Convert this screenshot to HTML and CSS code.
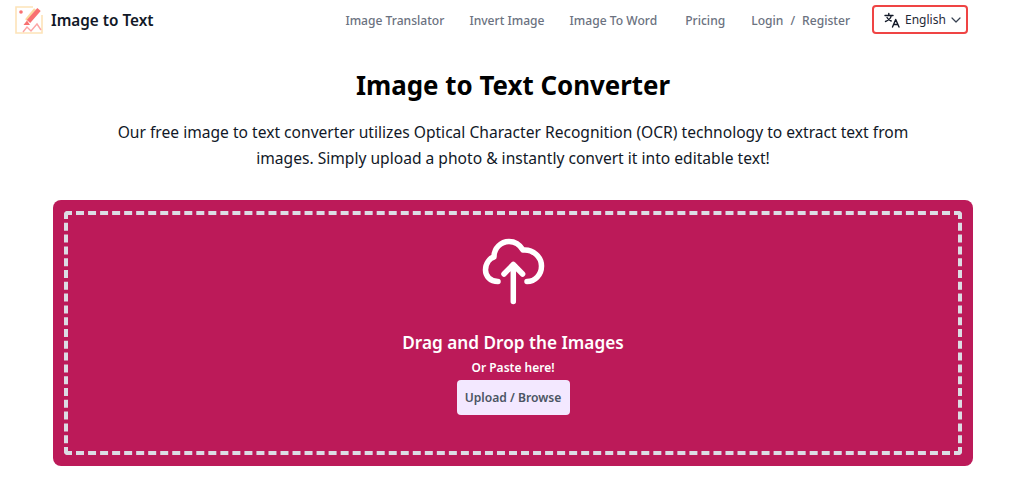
FILE: index.html
```html
<!DOCTYPE html>
<html lang="en">
<head>
<meta charset="utf-8">
<title>Image to Text</title>
<link rel="stylesheet" href="styles.css">
</head>
<body>
<header class="nav">
  <a class="brand" href="#">
    <svg class="logo" viewBox="0 0 28 28" width="28" height="28" fill="none">
      <path d="M18 1H1v26h26V9" stroke="#fde3b8" stroke-width="1.6"/>
      <path d="M11 14 20 3" stroke="#fcd9a0" stroke-width="2.5"/>
      <path d="M13.5 15.5 24 3.5" stroke="#f87171" stroke-width="4.5"/>
      <circle cx="6" cy="6" r="1.8" fill="#f87171"/>
      <path d="M12 14.5l3 4.5H8.5z" fill="#f87171"/>
      <path d="M8 26l4-5 4 4 6-7 4 6" stroke="#fca5a5" stroke-width="1.4"/>
    </svg>
    <span>Image to Text</span>
  </a>
  <nav class="links">
    <a href="#">Image Translator</a>
    <a href="#">Invert Image</a>
    <a href="#">Image To Word</a>
    <a class="pricing" href="#">Pricing</a>
    <span class="auth"><a href="#">Login</a><span class="slash">/</span><a href="#">Register</a></span>
  </nav>
  <button class="lang" type="button">
    <svg viewBox="0 0 16 16" width="16" height="16" fill="none" stroke="#111827" stroke-width="1.4" stroke-linecap="round" stroke-linejoin="round">
      <path d="M1 3.500h8M4.800 1.500v2M7.300 3.500C6.800 6.300 4.500 8.300 1.500 9.500M3 5.500c.9 1.700 2.300 2.800 4.200 3.500"/>
      <path d="M8.500 15l3.200-7.500L15 15M9.700 12.500h4.100"/>
    </svg>
    <span>English</span>
    <svg class="chev" viewBox="0 0 10 6" width="10" height="6" fill="none" stroke="#374151" stroke-width="1.200" stroke-linecap="round" stroke-linejoin="round">
      <path d="M1 1l4 4 4-4"/>
    </svg>
  </button>
</header>
<main class="main">
  <h1>Image to Text Converter</h1>
  <p class="lead">Our free image to text converter utilizes Optical Character Recognition (OCR) technology to extract text from images. Simply upload a photo &amp; instantly convert it into editable text!</p>
  <section class="drop">
    <div class="dash">
      <svg class="cloud" viewBox="481 237 64 72" width="64" height="72" fill="none" stroke="#fff" stroke-width="5.500" stroke-linecap="round" stroke-linejoin="round">
        <path d="M498 281.500C490 281.500 485.500 276 485.500 270C485.500 263 490 258 494 257C494 248 501 241.500 509 241.500C515 241.500 520 245 523 250C533 249 541.500 257 541.500 266C541.500 275 535 281.500 527 281.500"/>
        <path d="M513.300 301.500V264.500M504 274L513.300 264.500L522.600 274"/>
      </svg>
      <h2>Drag and Drop the Images</h2>
      <p class="paste">Or Paste here!</p>
      <button class="upload" type="button">Upload / Browse</button>
    </div>
  </section>
</main>
</body>
</html>
```
FILE: styles.css
```css
* { box-sizing: border-box; }
html, body { margin: 0; padding: 0; }
body {
  background: #fff;
  font-family: "Noto Sans", "Open Sans", sans-serif;
  color: #000;
  height: 484px;
  overflow: hidden;
}
a { text-decoration: none; color: inherit; }
.nav {
  display: flex;
  align-items: center;
  height: 40px;
  padding: 0 56px 0 15px;
}
.brand {
  display: flex;
  align-items: center;
  gap: 8px;
  margin-bottom: 1px;
  font-size: 15.300px;
  font-weight: 600;
  color: #111827;
}
.logo { display: block; }
.links {
  display: flex;
  align-items: center;
  gap: 25px;
  margin-left: auto;
  font-size: 12.100px;
  font-weight: 500;
  color: #6b7280;
}
.pricing { margin-left: 3px; }
.auth { display: flex; gap: 7px; margin-left: 1px; }
.lang {
  display: flex;
  align-items: center;
  gap: 5px;
  width: 96px;
  height: 29px;
  margin: 0 0 2px 22px;
  padding: 1px 0 0 10px;
  border: 2px solid #ef4444;
  border-radius: 4px;
  background: #fff;
  font: inherit;
  font-size: 12px;
  color: #1f2937;
}
.main { display: flex; flex-direction: column; align-items: center; padding: 0 51px 0 53px; }
h1 {
  margin: 27px 0 0;
  font-size: 25.900px;
  line-height: 36px;
  font-weight: 700;
  color: #000;
}
.lead {
  margin: 16px 0 0;
  width: 810px;
  text-align: center;
  font-size: 15.600px;
  line-height: 26px;
  color: #111827;
}
.drop {
  width: 920px;
  height: 266px;
  margin-top: 29px;
  padding: 11px;
  background: #bc1a59;
  border-radius: 8px;
}
.dash {
  display: flex;
  flex-direction: column;
  align-items: center;
  height: 100%;
  padding-top: 22px;
  border: 4px dashed #dcdce4;
  border-radius: 4px;
  color: #fff;
}
.cloud { display: block; }
h2 {
  margin: 22px 0 0;
  font-size: 17.200px;
  line-height: 24px;
  font-weight: 600;
}
.paste {
  margin: 4px 0 0;
  font-size: 12px;
  line-height: 18px;
  font-weight: 600;
}
.upload {
  width: 113px;
  height: 35px;
  margin-top: 3px;
  border: 0;
  border-radius: 4px;
  background: #f3e8ff;
  color: #4b5563;
  font: inherit;
  font-size: 12.100px;
  font-weight: 600;
}
```
